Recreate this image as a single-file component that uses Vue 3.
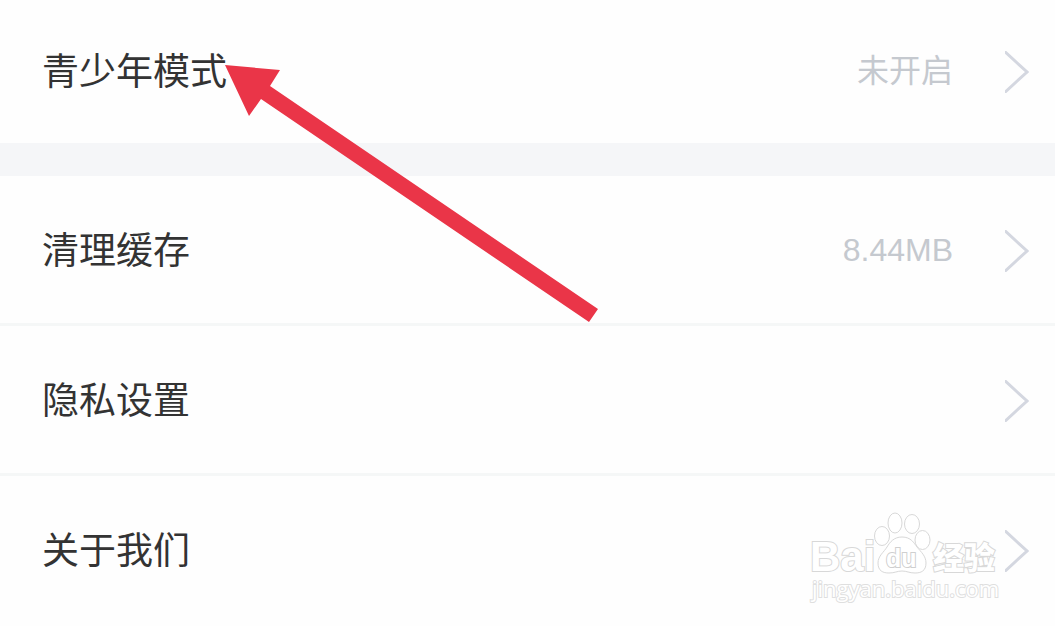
<script setup>
const groups = [
  [{ label: '青少年模式', value: '未开启' }],
  [
    { label: '清理缓存', value: '8.44MB' },
    { label: '隐私设置', value: '' },
    { label: '关于我们', value: '' },
  ],
]
</script>

<template>
  <main class="settings">
    <ul v-for="(group, g) in groups" :key="g" class="group">
      <li v-for="item in group" :key="item.label" class="item">
        <button type="button" class="row">
          <span class="label">{{ item.label }}</span>
          <span class="value">{{ item.value }}</span>
          <svg class="chevron" viewBox="0 0 24 42" aria-hidden="true">
            <path d="M-2 -1L22 21L-2 43" />
          </svg>
        </button>
      </li>
    </ul>

    <svg class="arrow" viewBox="0 0 374 258" aria-hidden="true">
      <path d="M0 0L55 5L45 21L373 244L364 257L36 34L24 51Z" />
    </svg>

    <svg class="watermark" viewBox="0 0 200 100" role="img" aria-label="Baidu 经验">
      <g class="outline">
        <text class="brand" x="2" y="65">Bai</text>
        <ellipse cx="74" cy="30" rx="7.5" ry="9.5" />
        <ellipse cx="87" cy="17" rx="7" ry="10" />
        <ellipse cx="104" cy="18" rx="7.5" ry="9.5" />
        <ellipse cx="114.500" cy="34" rx="7.5" ry="9.5" />
        <path d="M94 31C103 31 106 37 109 41C113 46 118 50 118 57C118 65 113 67 107 67C101 67 99 65 94 65C89 65 87 67 81 67C75 67 70 65 70 57C70 50 76 46 79 41C82 36 86 31 94 31Z" />
        <text class="du" x="78" y="61">du</text>
        <text class="cn" x="125" y="63">经验</text>
        <text class="site" x="4" y="91">jingyan.baidu.com</text>
      </g>
    </svg>
  </main>
</template>

<style>
body {
  margin: 0;
  background: #fefefe;
}
</style>

<style scoped>
.settings {
  position: relative;
  overflow: hidden;
  font-family: "Noto Sans CJK SC", sans-serif;
  background: #fefefe;
}

.group {
  margin: 0;
  padding: 0;
  list-style: none;
}

.group + .group {
  border-top: 33px solid #f5f6f8;
}

.item + .item {
  border-top: 3px solid #f5f7f7;
}

.row {
  display: flex;
  align-items: center;
  box-sizing: border-box;
  width: 100%;
  min-height: 147px;
  padding: 2px 26px 0 42px;
  border: 0;
  background: transparent;
  font: inherit;
  text-align: left;
  cursor: pointer;
}

.group:first-child .row {
  min-height: 143px;
  padding-top: 0;
}

.label {
  flex: 1;
  padding-bottom: 6px;
  font-size: 37px;
  line-height: 48px;
  color: #333;
}

.value {
  margin-right: 52px;
  padding-bottom: 2px;
  font-family: "Liberation Sans", "Noto Sans CJK SC", sans-serif;
  font-size: 32px;
  line-height: 48px;
  color: #c5c9cf;
}

.chevron {
  width: 24px;
  height: 42px;
  fill: none;
  stroke: #d4d7e0;
  stroke-width: 3;
}

.arrow {
  position: absolute;
  top: 65px;
  left: 225px;
  width: 374px;
  height: 258px;
  fill: #ea3548;
  pointer-events: none;
}

.watermark {
  position: absolute;
  right: 47px;
  bottom: 17px;
  width: 200px;
  height: 100px;
  pointer-events: none;
}

.outline {
  fill: #fff;
  stroke: #d8d8d8;
  stroke-width: 1;
}

.outline text {
  stroke-width: 2;
  paint-order: stroke;
}

.brand {
  font: bold 42px "Liberation Sans", sans-serif;
}

.outline .du {
  font: bold 25px "Liberation Sans", sans-serif;
  stroke: #cfcfcf;
}

.cn {
  font: 900 31px "Noto Sans CJK SC", sans-serif;
}

.outline .site {
  font: 22px "Open Sans", sans-serif;
  stroke: #dfdfdf;
}
</style>
